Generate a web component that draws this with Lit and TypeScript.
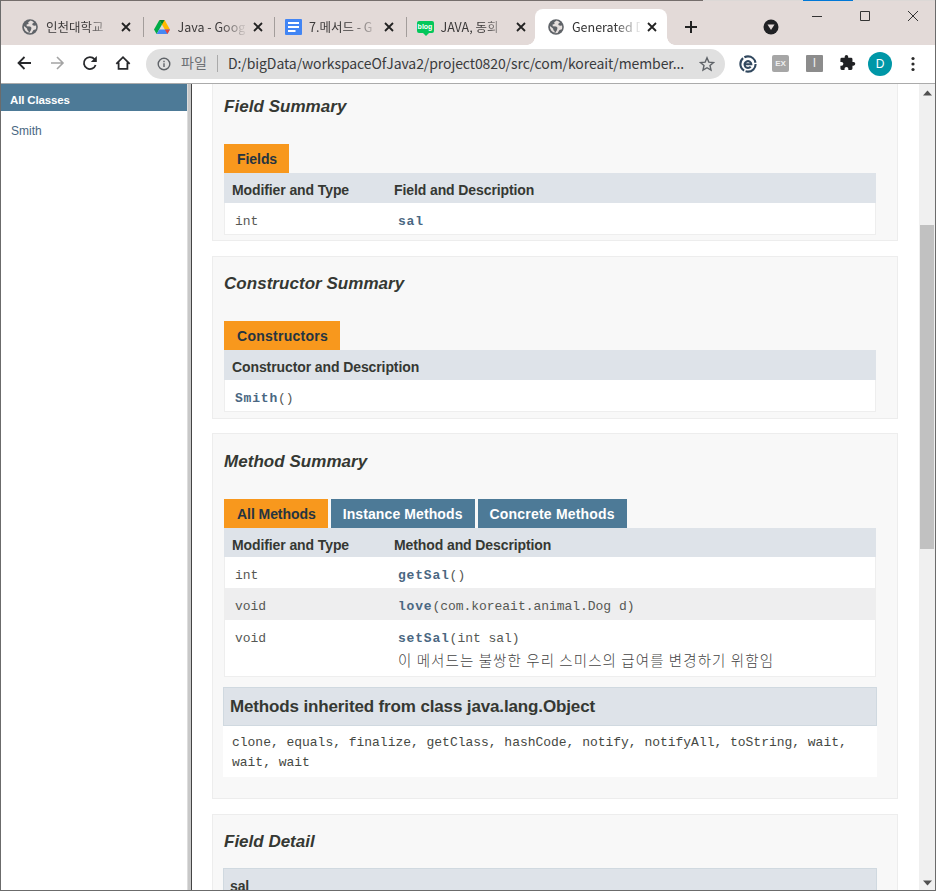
import { LitElement, html, css, svg, nothing } from "lit";
import { customElement, property } from "lit/decorators.js";

const ICONS: Record<string, unknown> = {
  globe: svg`<circle cx="8" cy="8" r="7.8" fill="#5f6368"/><path d="M8.600 1.500 6.200 3.300 6.600 5 4.600 5.600 4.700 7.200 8.200 7.400 9.500 8.800 9 11 7.200 13.900A6.200 6.200 0 0 1 1.900 7L5 9.500 5.600 11.400 6.500 12 6.700 14.200 9.600 14 11.500 11 13.900 10.200A6.200 6.200 0 0 0 14 6.500L12.200 6.800 10.300 5.900 10.500 4.500 12 3.400A6.200 6.200 0 0 0 8.600 1.500Z" fill="#e6dfdd"/>`,
  drive: svg`<path d="M5.400 1h5.200L16 10.400h-5.200Z" fill="#ffba00"/><path d="M5.400 1 8 5.600 2.600 15 0 10.400Z" fill="#00ac47"/><path d="M5.400 1h5.200L8 5.600Z" fill="#00832d"/><path d="M5.300 10.400H16L13.400 15H2.600Z" fill="#4688f4"/><path d="M10.800 10.400H16L13.400 15Z" fill="#ea4335"/>`,
  docs: svg`<rect width="17" height="16" rx="1" fill="#4285f4"/><path d="M3 4h11M3 8h11M3 12h7.500" stroke="#fff" stroke-width="1.800"/>`,
};

@customElement("browser-tab")
class BrowserTab extends LitElement {
  @property() label = "";
  @property() icon = "globe";
  @property({ type: Boolean, reflect: true }) active = false;
  @property({ type: Boolean, reflect: true }) divider = false;
  static styles = css`
    :host { display: flex; align-items: center; height: 36px; box-sizing: border-box; padding-left: 13px; position: relative;
      font: 12.5px "Noto Sans CJK KR", sans-serif; color: #3c3a3a; width: 131.5px; }
    :host([active]) { background: #fff; border-radius: 8px 8px 0 0; color: #333; }
    :host([active])::before, :host([active])::after { content: ""; position: absolute; bottom: 0; width: 8px; height: 8px; }
    :host([active])::before { left: -8px; background: radial-gradient(circle at 0 0, transparent 7.5px, #fff 8px); }
    :host([active])::after { right: -8px; background: radial-gradient(circle at 100% 0, transparent 7.5px, #fff 8px); }
    svg { flex: none; display: block; }
    .ico { width: 17px; height: 16px; }
    .label { width: 68px; margin-left: 7px; white-space: nowrap; line-height: 20px;
      -webkit-mask-image: linear-gradient(90deg, #000 42px, transparent 70px); mask-image: linear-gradient(90deg, #000 42px, transparent 70px); }
    .x { width: 10px; height: 10px; margin-left: 7px; }
    .blog { width: 17px; height: 12px; background: #03c75a; border-radius: 2px; position: relative; flex: none;
      font: bold 7px/11px "Liberation Sans", sans-serif; color: #fff; text-align: center; }
    .blog::after { content: ""; position: absolute; left: 6px; top: 12px; border: 3px solid transparent; border-top-color: #03c75a; border-bottom: 0; }
    .div { position: absolute; right: -3px; top: 8px; width: 1px; height: 20px; background: #a39d9b; }
  `;
  render() {
    return html`
      ${this.icon === "blog" ? html`<div class="blog">blog</div>`
        : html`<svg class="ico" viewBox="0 0 17 16">${ICONS[this.icon]}</svg>`}
      <div class="label">${this.label}</div>
      <svg class="x" viewBox="0 0 10 10"><path d="m1 1 8 8M9 1 1 9" stroke="#222" stroke-width="1.800"/></svg>
      ${this.divider ? html`<i class="div"></i>` : nothing}`;
  }
}

interface Row { type?: string; name: string; args?: string; note?: string }

@customElement("summary-section")
class SummarySection extends LitElement {
  @property() heading = "";
  @property({ attribute: false }) tabs: string[] = [];
  @property({ attribute: false }) cols: string[] = [];
  @property({ attribute: false }) rows: Row[] = [];
  static styles = css`
    :host { display: block; box-sizing: border-box; width: 686px; border: 1px solid #ededed; background: #f8f8f8; padding: 0 21px 0 11px;
      font-family: "Liberation Sans", Arial, sans-serif; color: #353833; }
    h3 { margin: 0; font: italic bold 17px/20px "Liberation Sans", Arial, sans-serif; padding-top: 17px; height: 47px; white-space: nowrap; letter-spacing: .04px; }
    .tabs { display: flex; gap: 3px; height: 29px; }
    .tab { background: #4d7a97; color: #fff; font-weight: bold; font-size: 14px; line-height: 30px; padding: 0 12px; white-space: nowrap; letter-spacing: .1px; }
    .tab:first-child { background: #f8981d; color: #253441; padding-left: 13px; letter-spacing: var(--first-tab-spacing, -.06px); }
    .tab:last-child:not(:first-child) { letter-spacing: .2px; padding-right: 12.5px; }
    .row { display: grid; grid-template-columns: 162px 1fr; }
    .row.one { grid-template-columns: 1fr; }
    .head { background: #dee3e9; height: var(--head-height, 29px); padding: 0 8px; font-weight: bold; font-size: 14px; line-height: 34px; letter-spacing: -.1px; }
    .body { border: 1px solid #eee; border-top: 0; background: #fff; }
    .item { height: 31px; box-sizing: border-box; padding: 0 0 0 10px; font: 13px/38px "Liberation Mono", monospace; color: #565854; white-space: pre; letter-spacing: -.03px; }
    .item.alt { background: #eeeeef; height: 32px; }
    .item.noted { height: 56px; line-height: 37px; }
    .item > :last-child { padding-left: 1px; }
    .one.item > :last-child { padding-left: 0; }
    b { color: #4a6782; letter-spacing: .8px; }
    .note { font: 300 14.5px/20px "Noto Sans CJK KR", sans-serif; margin-top: -7px; letter-spacing: 1.08px; color: #444; }
  `;
  render() {
    const one = this.cols.length === 1 ? "one" : "";
    return html`
      <h3>${this.heading}</h3>
      <div class="tabs">${this.tabs.map((t) => html`<div class="tab">${t}</div>`)}</div>
      <div class="row head ${one}">${this.cols.map((c) => html`<div>${c}</div>`)}</div>
      <div class="body">${this.rows.map((r, i) => html`<div class="row item ${one} ${i % 2 ? "alt" : ""} ${r.note ? "noted" : ""}">${one ? nothing : html`<div>${r.type}</div>`}<div><b>${r.name}</b>${r.args}${r.note ? html`<div class="note">${r.note}</div>` : nothing}</div></div>`)}</div>
      <slot></slot>`;
  }
}

@customElement("app-root")
class AppRoot extends LitElement {
  static styles = css`
    :host { display: block; width: 936px; height: 891px; overflow: hidden; position: relative; background: #fff; font-family: "Liberation Sans", Arial, sans-serif; }
    .window { display: flex; flex-direction: column; height: 891px; box-sizing: border-box; border: solid #6b6b6b; border-width: 0 1px 1px; }
    .edge { height: 1px; flex: none; display: grid; grid-template-columns: 702px 100px 50px 1fr; background: #dcd8d6; }
    .edge :first-child { background: #756e6c; }
    .edge :nth-child(3) { background: #0078d7; }
    .strip { height: 44px; flex: none; background: #e3dad8; display: flex; align-items: flex-end; padding-left: 8px; position: relative; }
    .plus { width: 14px; height: 14px; margin: 0 0 11px 17px; }
    .search { width: 16px; height: 16px; margin: 0 0 10px 65px; }
    .win { position: absolute; right: 16px; top: 8px; display: flex; gap: 36px; }
    .win svg { width: 12px; height: 13px; }
    .bar { height: 38px; flex: none; display: flex; align-items: center; border-bottom: 1px solid #ababab; }
    .bar svg { display: block; flex: none; }
    .nav { display: flex; gap: 17px; padding-left: 14.5px; width: 130.5px; flex: none; margin-top: -2px; }
    .nav svg { width: 16px; height: 16px; }
    .omni { width: 579px; height: 30px; border-radius: 15px; background: #e0e0e0; display: flex; align-items: center; box-sizing: border-box; padding-left: 11px; margin-top: -1px;
      font: 14px/20px "Noto Sans CJK KR", sans-serif; color: #3a3b3d; white-space: nowrap; flex: none; }
    .file { margin-left: 9px; width: 37px; border-right: 1px solid #aaa; color: #6d7074; line-height: 15px; box-sizing: border-box; height: 17px; }
    .url { margin-left: 10px; width: 471px; letter-spacing: -.09px; margin-top: -2px; }
    .ext { display: flex; align-items: center; margin: -1px 0 0 14px; }
    .ext svg, .sq, .avatar { flex: none; }
    .sq { width: 17px; height: 17px; margin-left: 15px; background: #a6a6a6; border-radius: 2px; color: #eee; font: bold 8px/17px "Liberation Sans", sans-serif; text-align: center; }
    .sq.i { background: #8c8c8c; font: 12px/16px "Liberation Sans", sans-serif; border-radius: 1px; margin-left: 17px; }
    .puzzle { margin-left: 16px; }
    .avatar { width: 24px; height: 24px; border-radius: 50%; background: #0097a7; color: #fff; font: 12px/24px "Liberation Sans", sans-serif; text-align: center; margin-left: 12px; }
    .dots { margin-left: 12px; }
    .page { flex: 1; min-height: 0; display: grid; grid-template-columns: 186px 5px 1fr 16px; }
    .classes .title { background: #4d7a97; color: #fff; font-weight: bold; font-size: 11.5px; line-height: 33px; height: 27px; padding-left: 9px; letter-spacing: -.15px; }
    .classes .link { color: #4a6782; font-size: 12px; line-height: 16px; padding: 12px 0 0 10px; }
    .split { background: #c8c8c8; border-right: 1px solid #444; border-left: 1px solid #ddd; }
    .doc { overflow: hidden; padding-left: 20px; display: flex; flex-direction: column; }
    .doc > * { flex: none; }
    .fields { height: 162px; margin-top: -5px; --head-height: 30px; }
    .ctor { height: 163px; margin-top: 15px; --first-tab-spacing: .27px; --head-height: 30px; }
    .methods { height: 366px; margin-top: 14px; padding-top: 1px; }
    .detail { height: 120px; margin-top: 15px; border: 1px solid #ededed; background: #f8f8f8; width: 686px; box-sizing: border-box; padding: 17px 20px 0 10px; color: #353833; }
    .detail h3 { margin: 0; padding-left: 1px; font: italic bold 17px/20px "Liberation Sans", sans-serif; height: 36px; }
    .bluebox { background: #dee3e9; border: 1px solid #d0d9e0; height: 39px; box-sizing: border-box; padding-left: 6px; font-weight: bold; font-size: 17px; line-height: 38px; margin: 10px -1px 0; letter-spacing: -.14px; }
    .detail .bluebox { margin: 0; font-size: 14px; line-height: 35px; }
    .inherited { background: #fff; height: 51px; margin: 0 -1px; box-sizing: border-box; padding: 7px 0 0 9px; font: 13px/20px "Liberation Mono", monospace; color: #454843; white-space: pre; letter-spacing: -.02px; }
    .scroll { background: #f0f0f0; display: flex; flex-direction: column; align-items: center; justify-content: space-between; padding: 6px 0 4px; }
    .scroll svg { width: 9px; height: 6px; }
    .thumb { width: 14px; height: 324px; background: #c1c1c1; margin-top: 129px; margin-bottom: auto; }
  `;
  render() {
    return html`
      <div class="window">
        <div class="edge"><i></i><i></i><i></i><i></i></div>
        <div class="strip">
          <browser-tab divider label="인천대학교"></browser-tab>
          <browser-tab divider icon="drive" label="Java - Goog"></browser-tab>
          <browser-tab divider icon="docs" label="7.메서드 - G"></browser-tab>
          <browser-tab icon="blog" label="JAVA, 동희"></browser-tab>
          <browser-tab active label="Generated D"></browser-tab>
          <svg class="plus" viewBox="0 0 14 14"><path d="M7 1v12M1 7h12" stroke="#222" stroke-width="2"/></svg>
          <svg class="search" viewBox="0 0 16 16"><circle cx="8" cy="8" r="7.500" fill="#202124"/><path d="M4.500 5.500h7L8 11Z" fill="#e3dad8"/></svg>
          <div class="win">
            <svg viewBox="0 0 12 13"><path d="M1 7.500h10" stroke="#333"/></svg>
            <svg viewBox="0 0 12 13"><path d="M1.500 2.500h9v9h-9z" fill="none" stroke="#333"/></svg>
            <svg viewBox="0 0 12 13"><path d="m1 2 10 10M11 2 1 12" stroke="#333"/></svg>
          </div>
        </div>
        <div class="bar">
          <div class="nav">
            <svg viewBox="0 0 16 16" fill="none" stroke="#27282b" stroke-width="1.800"><path d="M15 8H3M8.500 2 2.500 8l6 6"/></svg>
            <svg viewBox="0 0 16 16" fill="none" stroke="#a4a4a4" stroke-width="1.600"><path d="M2 8h12M8 2l6 6-6 6"/></svg>
            <svg viewBox="0 0 16 16"><path d="M13.600 10A6 6 0 1 1 12.500 4.200" fill="none" stroke="#27282b" stroke-width="1.800"/><path d="M14.800 1v6h-6Z" fill="#27282b"/></svg>
            <svg viewBox="0 0 16 16" fill="none" stroke="#27282b" stroke-width="1.800"><path d="M1.300 8.800 8 2.200l6.700 6.600M3.600 7.500v6.400h8.800V7.500"/></svg>
          </div>
          <div class="omni">
            <svg width="15" height="14" viewBox="0 0 15 14"><circle cx="7" cy="7" r="5.800" fill="none" stroke="#5f6368" stroke-width="1.400"/><path d="M7 6.200V10M7 3.800v1.400" stroke="#5f6368" stroke-width="1.400"/></svg>
            <div class="file">파일</div>
            <div class="url">D:/bigData/workspaceOfJava2/project0820/src/com/koreait/member...</div>
            <svg width="16" height="16" viewBox="0 0 16 16"><path d="m8 1.800 1.800 4.300 4.700.4L11 9.500l1 4.600-4-2.400-4 2.400 1-4.600L1.500 6.500l4.700-.4Z" fill="none" stroke="#5f6368" stroke-width="1.400"/></svg>
          </div>
          <div class="ext">
            <svg width="18" height="18" viewBox="0 0 17 17"><circle cx="8.500" cy="8.500" r="7.200" fill="#fff" stroke="#30475e" stroke-width="2" stroke-dasharray="13.600 1.480"/><path d="M5.200 8.700h6.400A3.200 3.200 0 1 0 11 10.900" fill="#fff" stroke="#30475e" stroke-width="2"/></svg>
            <div class="sq">EX</div>
            <div class="sq i">I</div>
            <svg class="puzzle" width="17" height="17" viewBox="0 0 24 24"><path transform="translate(0 -1)" d="M20.500 11H19V7a2 2 0 0 0-2-2h-4V3.500a2.500 2.500 0 0 0-5 0V5H4a2 2 0 0 0-2 2v3.800h1.500a2.700 2.700 0 0 1 0 5.400H2V20a2 2 0 0 0 2 2h3.800v-1.500a2.700 2.700 0 0 1 5.400 0V22H17a2 2 0 0 0 2-2v-4h1.500a2.500 2.500 0 0 0 0-5Z" fill="#202124"/></svg>
            <div class="avatar">D</div>
            <svg class="dots" width="18" height="16" viewBox="0 0 18 16"><g fill="#2b2b2b"><circle cx="9" cy="2.500" r="1.600"/><circle cx="9" cy="8" r="1.600"/><circle cx="9" cy="13.500" r="1.600"/></g></svg>
          </div>
        </div>
        <div class="page">
          <div class="classes"><div class="title">All Classes</div><div class="link">Smith</div></div>
          <div class="split"></div>
          <div class="doc">
            <summary-section class="fields" heading="Field Summary" .tabs=${["Fields"]} .cols=${["Modifier and Type", "Field and Description"]}
              .rows=${[{ type: "int", name: "sal" }]}></summary-section>
            <summary-section class="ctor" heading="Constructor Summary" .tabs=${["Constructors"]} .cols=${["Constructor and Description"]}
              .rows=${[{ name: "Smith", args: "()" }]}></summary-section>
            <summary-section class="methods" heading="Method Summary" .tabs=${["All Methods", "Instance Methods", "Concrete Methods"]} .cols=${["Modifier and Type", "Method and Description"]}
              .rows=${[
                { type: "int", name: "getSal", args: "()" },
                { type: "void", name: "love", args: "(com.koreait.animal.Dog d)" },
                { type: "void", name: "setSal", args: "(int sal)", note: "이 메서드는 불쌍한 우리 스미스의 급여를 변경하기 위함임" },
              ]}>
              <div class="bluebox">Methods inherited from class java.lang.Object</div>
              <div class="inherited">clone, equals, finalize, getClass, hashCode, notify, notifyAll, toString, wait,
wait, wait</div>
            </summary-section>
            <div class="detail"><h3>Field Detail</h3><div class="bluebox">sal</div></div>
          </div>
          <div class="scroll">
            <svg viewBox="0 0 9 6"><path d="M0 5.500 4.500.5 9 5.500Z" fill="#505050"/></svg>
            <div class="thumb"></div>
            <svg viewBox="0 0 9 6"><path d="M0 .5 4.500 5.500 9 .5Z" fill="#505050"/></svg>
          </div>
        </div>
      </div>`;
  }
}
